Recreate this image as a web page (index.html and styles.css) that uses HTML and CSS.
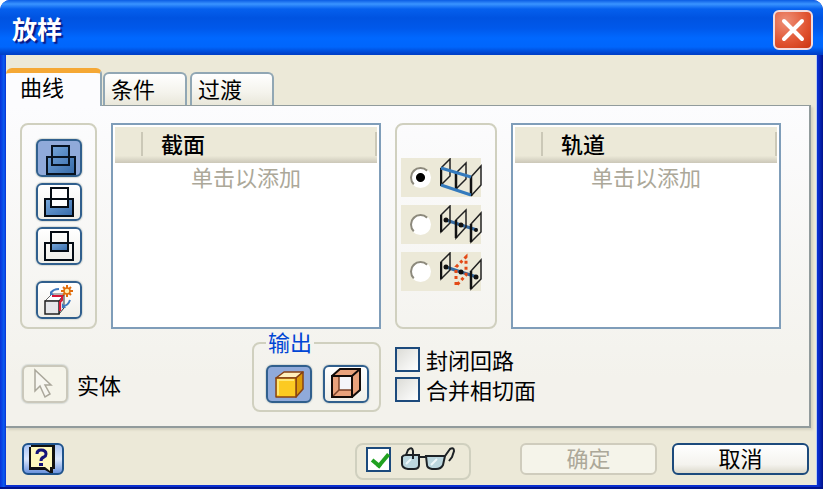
FILE: index.html
```
<!DOCTYPE html>
<html lang="zh-CN">

<head>
  <meta charset="UTF-8" />
  <meta name="viewport" content="width=device-width, initial-scale=1.0" />
  <title>放样</title>
  <link rel="stylesheet" href="styles.css">
</head>

<body>
  <div class="dialog">
    <div class="title-bar">
      <h1>放样</h1>
      <button type="button" class="close-btn" aria-label="关闭">
        <svg width="24" height="24" viewBox="0 0 24 24">
          <path d="M3 3L21 21M21 3L3 21" stroke="#fff" stroke-width="4" stroke-linecap="round" />
        </svg>
      </button>
    </div>

    <div class="dialog-body">
      <div class="tabs" role="tablist">
        <button type="button" class="tab active" role="tab" aria-selected="true">曲线</button>
        <button type="button" class="tab" role="tab">条件</button>
        <button type="button" class="tab" role="tab">过渡</button>
      </div>

      <div class="panel">
        <!-- boolean operation -->
        <div class="group operations">
          <button type="button" class="icon-btn pressed" aria-label="求并">
            <svg width="44" height="36" viewBox="0 0 44 36">
              <defs>
                <linearGradient id="blue" x1="0" y1="0" x2="1" y2="1">
                  <stop offset="0" stop-color="#79a9dc" />
                  <stop offset="1" stop-color="#356aa9" />
                </linearGradient>
              </defs>
              <path d="M15 6H32V17H38V34H10V17H15Z" fill="url(#blue)" />
              <path d="M15 6H32V25H15ZM10 17H38V34H10Z" fill="none" stroke="#071321" stroke-width="2" />
            </svg>
          </button>
          <button type="button" class="icon-btn" aria-label="求差">
            <svg width="44" height="36" viewBox="0 0 44 36">
              <path d="M8 15H36V32H8Z" fill="url(#blue)" />
              <path d="M14 4H31V23H14Z" fill="#fff" />
              <path d="M14 4H31V23H14ZM8 15H36V32H8Z" fill="none" stroke="#050c14" stroke-width="2" />
            </svg>
          </button>
          <button type="button" class="icon-btn" aria-label="求交">
            <svg width="44" height="36" viewBox="0 0 44 36">
              <path d="M14 15H31V23H14Z" fill="url(#blue)" />
              <path d="M14 4H31V23H14ZM8 15H36V32H8Z" fill="none" stroke="#050c14" stroke-width="2" />
            </svg>
          </button>
          <button type="button" class="icon-btn new-solid" aria-label="新建实体">
            <svg width="44" height="36" viewBox="0 0 44 36">
              <path d="M8 19L15 12H27L22 19Z" fill="#fff" stroke="#666" />
              <path d="M22 19L27 13V26L22 32Z" fill="#dedee2" stroke="#333" />
              <path d="M8 19H22V32H8Z" fill="#e6e7ea" stroke="#222" stroke-width="1.500" />
              <path d="M15 14H25V18L23 20V29" fill="none" stroke="#d81636" stroke-width="2" />
              <path d="M14 11Q16 7 22 7M26 24Q31 24 33 18" fill="none" stroke="#3f79be" stroke-width="2" />
              <path d="M13 9V13H17ZM25 21V26H29Z" fill="#3f79be" />
              <path d="M30 3V15M24 9H36M26 5L34 13M34 5L26 13" stroke="#e16c0b" stroke-width="2" />
              <circle cx="30" cy="9" r="3" fill="#fff0b0" stroke="#e16c0b" stroke-width="1.500" />
            </svg>
          </button>
        </div>

        <table class="list">
          <thead>
            <tr>
              <th class="gutter"></th>
              <th scope="col" class="heading">截面</th>
            </tr>
          </thead>
          <tbody>
            <tr>
              <td colspan="2">单击以添加</td>
            </tr>
          </tbody>
        </table>

        <!-- loft type -->
        <div class="group loft-types">
          <label class="loft-type">
            <input type="radio" name="loftType" aria-label="轨道" checked>
            <svg width="42" height="39" viewBox="0 0 42 39">
              <g fill="none" stroke="#222" stroke-width="1.500">
                <path d="M1 10L10 1V18L1 27M16 15L26 5V21L16 31M31 19L41 8V27L31 38" />
                <path d="M1 10V28M16 15V32M31 19V38" stroke="#111" stroke-width="2.500" />
              </g>
              <path d="M1 10L31 19M1 27L31 37" stroke="#347abd" stroke-width="3" />
            </svg>
          </label>
          <label class="loft-type">
            <input type="radio" name="loftType" aria-label="中心线">
            <svg width="42" height="39" viewBox="0 0 42 39">
              <path d="M6 15L21 20L37 25" stroke="#356ba3" stroke-width="3" fill="none" />
              <g fill="none" stroke="#222" stroke-width="1.500">
                <path d="M1 10L10 1V18L1 27ZM16 15L26 5V22L16 33ZM31 19L41 8V27L31 37Z" />
                <path d="M1 10V27M16 15V33M31 19V37" stroke="#111" stroke-width="2.500" />
              </g>
              <g fill="#111">
                <circle cx="6" cy="15" r="2.500" />
                <circle cx="21" cy="20" r="2.500" />
                <circle cx="36" cy="25" r="2" />
              </g>
            </svg>
          </label>
          <label class="loft-type">
            <input type="radio" name="loftType" aria-label="面积放样">
            <svg width="42" height="39" viewBox="0 0 42 39">
              <path d="M6 15L21 20L37 25" stroke="#356ba3" stroke-width="3" fill="none" />
              <g fill="none" stroke="#222" stroke-width="1.500">
                <path d="M1 10L10 1V18L1 27ZM31 19L41 8V27L31 37Z" />
                <path d="M1 10V27M31 19V37" stroke="#111" stroke-width="2.500" />
              </g>
              <path d="M16 15L26 5V23L16 34Z" fill="none" stroke="#e34a17" stroke-width="3" stroke-dasharray="3 3" />
              <g fill="#111">
                <circle cx="6" cy="15" r="2.500" />
                <circle cx="21" cy="20" r="2.500" />
                <circle cx="36" cy="25" r="2.500" />
              </g>
            </svg>
          </label>
        </div>

        <table class="list">
          <thead>
            <tr>
              <th class="gutter"></th>
              <th scope="col" class="heading">轨道</th>
            </tr>
          </thead>
          <tbody>
            <tr>
              <td colspan="2">单击以添加</td>
            </tr>
          </tbody>
        </table>

        <div class="solid-row">
          <div class="solid-pick">
            <button type="button" class="icon-btn" id="pickSolid" disabled>
              <svg width="44" height="36" viewBox="0 0 44 36">
                <path d="M12 4V25L17 20L22 31L27 28L22 19H28Z" fill="#f7f6f0" stroke="#aaa79b" stroke-width="1.500" />
              </svg>
            </button>
            <label for="pickSolid">实体</label>
          </div>

          <fieldset class="output">
            <legend>输出</legend>
            <button type="button" class="icon-btn pressed" aria-label="实体">
              <svg width="44" height="36" viewBox="0 0 44 36">
                <g stroke="#874215" stroke-width="1.500" stroke-linejoin="round">
                  <path d="M9 12L17 6H36L29 12Z" fill="#fff0bd" />
                  <path d="M29 12L36 6V23L29 31Z" fill="#dc9b08" />
                  <path d="M9 12H29V31H9Z" fill="#fcca22" />
                </g>
                <path d="M11 29V14H27" fill="none" stroke="#ffe773" stroke-width="2" />
              </svg>
            </button>
            <button type="button" class="icon-btn" aria-label="曲面">
              <svg width="44" height="36" viewBox="0 0 44 36">
                <path d="M8 10L16 3H36V24L28 31H8Z" fill="#e9a27c" />
                <path d="M15 11H27V24H15Z" fill="#f4f5fa" />
                <path d="M8 31L15 24H28M15 24V11" fill="none" stroke="#7b4229" stroke-width="1.500" />
                <path d="M8 10H28V31H8ZM8 10L16 3H36V24L28 31M28 10L36 3" fill="none" stroke="#130b08" stroke-width="2" />
              </svg>
            </button>
          </fieldset>
        </div>

        <div class="options">
          <label class="check"><input type="checkbox">封闭回路</label>
          <label class="check"><input type="checkbox">合并相切面</label>
        </div>
      </div>

      <div class="footer">
        <button type="button" class="help-btn" aria-label="帮助">
          <svg width="38" height="28" viewBox="0 0 38 28">
            <path d="M7 0H31V24H29V28H26L21 25H5V2H7Z" fill="#111" />
            <path d="M7 2H28V22H26V26L21 22H7Z" fill="#fff9bd" />
            <path d="M13 9Q13 5 17 5Q22 5 22 9Q22 11 20 12Q17 13 17 16" fill="none" stroke="#161579" stroke-width="3" />
            <path d="M15 18H19V21H15Z" fill="#161579" />
          </svg>
        </button>
        <label class="group preview">
          <input type="checkbox" aria-label="预览" checked>
          <svg width="54" height="26" viewBox="0 0 54 26">
            <g fill="#bcd7df" stroke="#1d2226" stroke-width="2">
              <path d="M1 10Q2 8 5 8H18V18Q18 22 13 22H7Q1 21 1 17Z" />
              <path d="M25 9H44L42 18Q40 22 35 22H31Q26 21 26 18Z" />
            </g>
            <path d="M18 10H26M5 8L7 3Q11 -1 12 4V12M44 9L49 2Q53 0 53 4L51 10L48 14" fill="none" stroke="#1d2226" stroke-width="2" />
            <path d="M5 17L10 12M30 18L36 12" stroke="#eff8fa" stroke-width="2" />
          </svg>
        </label>
        <button type="button" class="btn" disabled>确定</button>
        <button type="button" class="btn">取消</button>
      </div>
    </div>
  </div>
</body>

</html>
```
FILE: styles.css
```
:root {
  --face: #ece9d8;
  --panel-border: #919b9c;
  --group-border: #d0d0bf;
  --field-border: #7f9db9;
  --navy: #1c4a7c;
  --disabled: #aca899;
}

* {
  box-sizing: border-box;
}

body {
  margin: 0;
  background: #fff;
  color: #000;
  font-family: "Noto Sans CJK SC", sans-serif;
  font-size: 22px;
  line-height: 30px;
}

button,
input {
  margin: 0;
  padding: 0;
  font: inherit;
  color: inherit;
}

svg {
  display: block;
  flex: none;
}

.dialog {
  display: flex;
  flex-direction: column;
  min-height: 100vh;
  padding: 0 6px 2px;
  background: linear-gradient(90deg, #0831d9, #0a5cf0 4px, #0a2fd0 6px, #0a2fd0 calc(100% - 5px), #00138c);
  border-bottom: 3px solid #00138c;
  border-radius: 10px 10px 0 0;
}

.title-bar {
  display: flex;
  align-items: center;
  justify-content: space-between;
  height: 55px;
  margin: 0 -6px;
  padding: 4px 10px 0 12px;
  border-radius: 10px 10px 0 0;
  background: linear-gradient(#0a5ce4, #3a94ff 4px, #0560ee 9px, #0053e1 18px, #0058ea 28px, #0068ff 38px, #0066fc 47px, #0040c8 54px);
}

.title-bar h1 {
  margin: 0;
  padding-bottom: 4px;
  color: #fff;
  font-size: 25px;
  font-weight: 700;
  text-shadow: 2px 2px 1px #0a1883;
}

.close-btn {
  display: flex;
  align-items: center;
  justify-content: center;
  width: 40px;
  height: 40px;
  border: 2px solid #f4dcdc;
  border-radius: 6px;
  background: radial-gradient(circle at 30% 25%, #ee9078, #e0522f 60%, #cb3510);
}

.dialog-body {
  flex: 1;
  background: var(--face);
  border-right: 1px solid #b9cdf3;
}

.tabs {
  display: flex;
  align-items: flex-end;
  gap: 3px;
  height: 50px;
}

.tab {
  width: 84px;
  height: 33px;
  padding: 0 0 4px 6px;
  border: 2px solid #91a7b4;
  border-bottom: 0;
  border-radius: 6px 6px 0 0;
  background: linear-gradient(#fff, #f4f3ec 60%, #e9e7da);
  line-height: 26px;
  text-align: left;
}

.tab.active {
  position: relative;
  width: 96px;
  height: 38px;
  margin: 0 -2px -1px 0;
  padding: 0 0 8px 14px;
  border-width: 0 2px 0 0;
  border-top: 5px solid #f5a835;
  background: #fcfcfe;
}

.panel {
  display: grid;
  grid-template-columns: 77px 1fr 102px 1fr;
  grid-template-rows: 206px auto;
  gap: 2px 14px;
  margin-right: 5px;
  padding: 17px 28px 14px 14px;
  border: 2px solid var(--panel-border);
  border-width: 1px 2px 2px 0;
  background: linear-gradient(#fcfcfe, #f3f2ec 85%);
  box-shadow: 2px 2px 2px #d5d2c2;
}

.group {
  border: 2px solid var(--group-border);
  border-radius: 8px;
}

.operations {
  display: flex;
  flex-direction: column;
  align-items: center;
  gap: 6px;
  padding-top: 14px;
}

.icon-btn {
  width: 46px;
  height: 38px;
  border: 2px solid #305f8d;
  border-radius: 6px;
  background: linear-gradient(#fff, #f0efe9);
  box-shadow: 0 0 1px 1px #d8dcd8;
  overflow: hidden;
  display: flex;
  align-items: center;
  justify-content: center;
}

.icon-btn.pressed {
  background: #90aada;
}

.icon-btn:disabled {
  border-color: #cac8bb;
  background: #f5f4ea;
}

.new-solid {
  margin-top: 10px;
}

.list {
  width: 100%;
  height: 100%;
  padding: 2px;
  border: 2px solid var(--field-border);
  border-spacing: 0;
  background: #fff;
}

.list th {
  height: 36px;
  padding: 0 0 4px;
  background: linear-gradient(#ece9d8 80%, #cbc7b8);
  font-weight: 400;
  text-align: left;
}

.list .gutter {
  width: 28px;
}

.list .gutter,
.list .heading {
  background:
    linear-gradient(#cbc8b7, #cbc8b7) right 5px / 2px 24px no-repeat,
    linear-gradient(#ece9d8 80%, #cbc7b8);
}

.list .heading {
  padding-left: 18px;
  font-weight: 500;
}

.list td {
  padding: 0;
  color: var(--disabled);
  line-height: 26px;
  text-align: center;
  vertical-align: top;
}

.loft-types {
  display: flex;
  flex-direction: column;
  gap: 8px;
  padding: 33px 14px 0 4px;
}

.loft-type {
  display: flex;
  align-items: center;
  gap: 9px;
  height: 39px;
  padding-left: 9px;
  background: var(--face);
}

input[type="radio"] {
  appearance: none;
  flex: none;
  width: 21px;
  height: 21px;
  border: 2px solid;
  border-color: #8c897c #fff #fff #8c897c;
  border-radius: 50%;
  background: #fff;
}

input[type="radio"]:checked {
  background: radial-gradient(circle, #000 4px, #fff 5px);
}

.solid-row {
  grid-column: 1 / 3;
  display: flex;
  justify-content: space-between;
  align-items: flex-end;
}

.solid-pick {
  display: flex;
  align-items: center;
  gap: 9px;
  padding: 0 0 9px 2px;
}

.output {
  display: flex;
  gap: 11px;
  width: 129px;
  height: 81px;
  margin: 0;
  padding: 10px 0 0 12px;
  border: 2px solid var(--group-border);
  border-radius: 8px;
}

.output legend {
  padding: 0 2px 4px;
  color: #0046d5;
  line-height: 20px;
}

.options {
  grid-column: 3 / 5;
  padding-top: 13px;
}

.check {
  display: flex;
  align-items: center;
  gap: 6px;
  width: fit-content;
}

input[type="checkbox"] {
  appearance: none;
  flex: none;
  width: 25px;
  height: 25px;
  border: 2px solid var(--navy);
  background: linear-gradient(135deg, #dcdcd7, #fff);
}

/* tick drawn as two borders of a rotated box */
input[type="checkbox"]:checked::before {
  content: "";
  display: block;
  width: 7px;
  height: 13px;
  margin: 1px 0 0 7px;
  border: solid #21a121;
  border-width: 0 4px 4px 0;
  transform: rotate(40deg);
}

.footer {
  display: flex;
  align-items: flex-start;
  gap: 15px;
  padding: 15px 7px 5px 16px;
}

.help-btn {
  display: flex;
  align-items: center;
  justify-content: center;
  width: 42px;
  height: 32px;
  border: 2px solid #1f538b;
  border-radius: 6px;
  background: linear-gradient(#a9c4f4, #dce8fd 50%, #6b93dd);
}

.preview {
  display: flex;
  align-items: center;
  gap: 10px;
  width: 116px;
  height: 37px;
  margin: 0 34px 0 auto;
  padding: 0 0 4px 9px;
}

.preview input[type="checkbox"] {
  background: #fff;
}

.btn {
  width: 137px;
  height: 32px;
  padding-bottom: 4px;
  border: 2px solid var(--navy);
  border-radius: 6px;
  background: linear-gradient(#fff, #f4f3ee 70%, #dcd9cc);
  line-height: 24px;
}

.btn:disabled {
  border-color: #cfccbd;
  background: #f5f4ea;
  color: var(--disabled);
}
```
